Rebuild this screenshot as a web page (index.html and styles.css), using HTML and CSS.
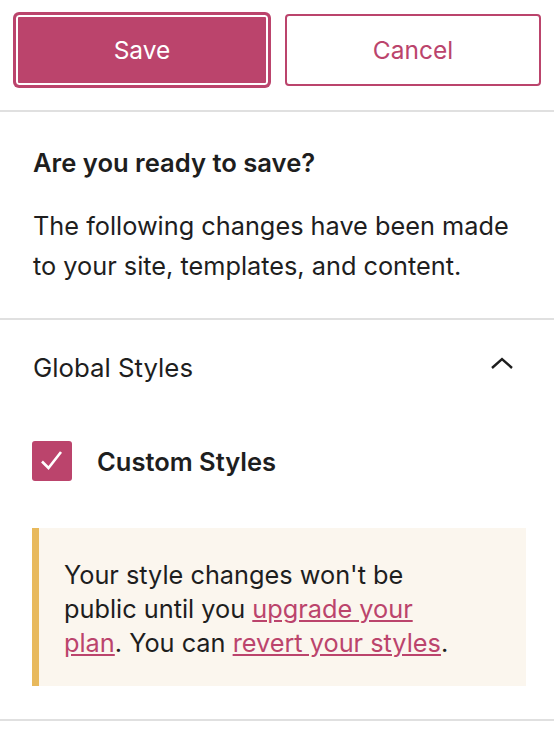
FILE: index.html
```html
<!DOCTYPE html>
<html lang="en">
<head>
  <meta charset="UTF-8">
  <meta name="viewport" content="width=device-width, initial-scale=1.0">
  <title>Save changes</title>
  <link rel="stylesheet" href="styles.css">
</head>
<body>
  <div class="actions">
    <button class="btn save" type="button">Save</button>
    <button class="btn cancel" type="button">Cancel</button>
  </div>

  <div class="section intro">
    <h2>Are you ready to save?</h2>
    <p>The following changes have been made to your site, templates, and content.</p>
  </div>

  <div class="section styles">
    <div class="panel-head">
      <span>Global Styles</span>
      <svg class="chevron" width="24" height="14" viewBox="0 0 24 14">
        <polyline points="2,11 12,2 22,11" fill="none" stroke="#1e1e1e" stroke-width="2.4"/>
      </svg>
    </div>

    <label class="check-row">
      <span class="checkbox">
        <svg width="40" height="40" viewBox="0 0 40 40">
          <polyline points="10,20.5 16.5,27 29,11" fill="none" stroke="#fff" stroke-width="2.6"/>
        </svg>
      </span>
      <span class="check-label">Custom Styles</span>
    </label>

    <div class="notice">
      Your style changes won't be public until you <a href="#">upgrade your plan</a>. You can <a href="#">revert your styles</a>.
    </div>
  </div>
</body>
</html>
```

FILE: styles.css
```css
body {
  margin: 0;
  background: #fff;
  color: #1e1e1e;
  font-family: Inter, "Noto Sans", sans-serif;
}
.actions {
  display: flex;
  gap: 16px;
  padding: 14px 13px 24px 15px;
  border-bottom: 2px solid #e0e0e0;
}
.btn {
  flex: 1;
  height: 72px;
  font-family: inherit;
  font-size: 24.5px;
  border-radius: 4px;
  cursor: pointer;
}
.save {
  background: #bb446c;
  color: #fff;
  border: 1px solid #bb446c;
  box-shadow: inset 0 0 0 2px #fff, 0 0 0 2px #bb446c;
}
.cancel {
  background: #fff;
  color: #bb446c;
  border: 2px solid #bb446c;
}
.section {
  padding: 0 33px;
  border-bottom: 2px solid #e0e0e0;
}
.intro {
  padding-top: 36px;
  padding-bottom: 32px;
}
.intro h2 {
  margin: 0;
  font-size: 25.6px;
  line-height: 30px;
  font-weight: 600;
}
.intro p {
  margin: 28px 0 0;
  font-size: 25.3px;
  line-height: 40px;
}
.styles {
  padding-top: 33px;
  padding-bottom: 33px;
  padding-left: 32px;
  padding-right: 28px;
}
.panel-head {
  display: flex;
  justify-content: space-between;
  align-items: center;
  font-size: 25.8px;
  line-height: 30px;
  padding-left: 1px;
}
.chevron {
  margin-right: 12px;
  margin-bottom: 8px;
}
.check-row {
  display: flex;
  align-items: center;
  gap: 25px;
  margin-top: 58px;
}
.checkbox {
  width: 40px;
  height: 40px;
  background: #bb446c;
  border-radius: 3px;
}
.checkbox svg {
  display: block;
}
.check-label {
  font-size: 25.5px;
  font-weight: 600;
}
.notice {
  margin-top: 47px;
  background: #fbf6ee;
  border-left: 7px solid #e8b95c;
  padding: 30px 54px 26px 25px;
  font-size: 25.3px;
  line-height: 34px;
}
.notice a {
  color: #bb446c;
}
```
